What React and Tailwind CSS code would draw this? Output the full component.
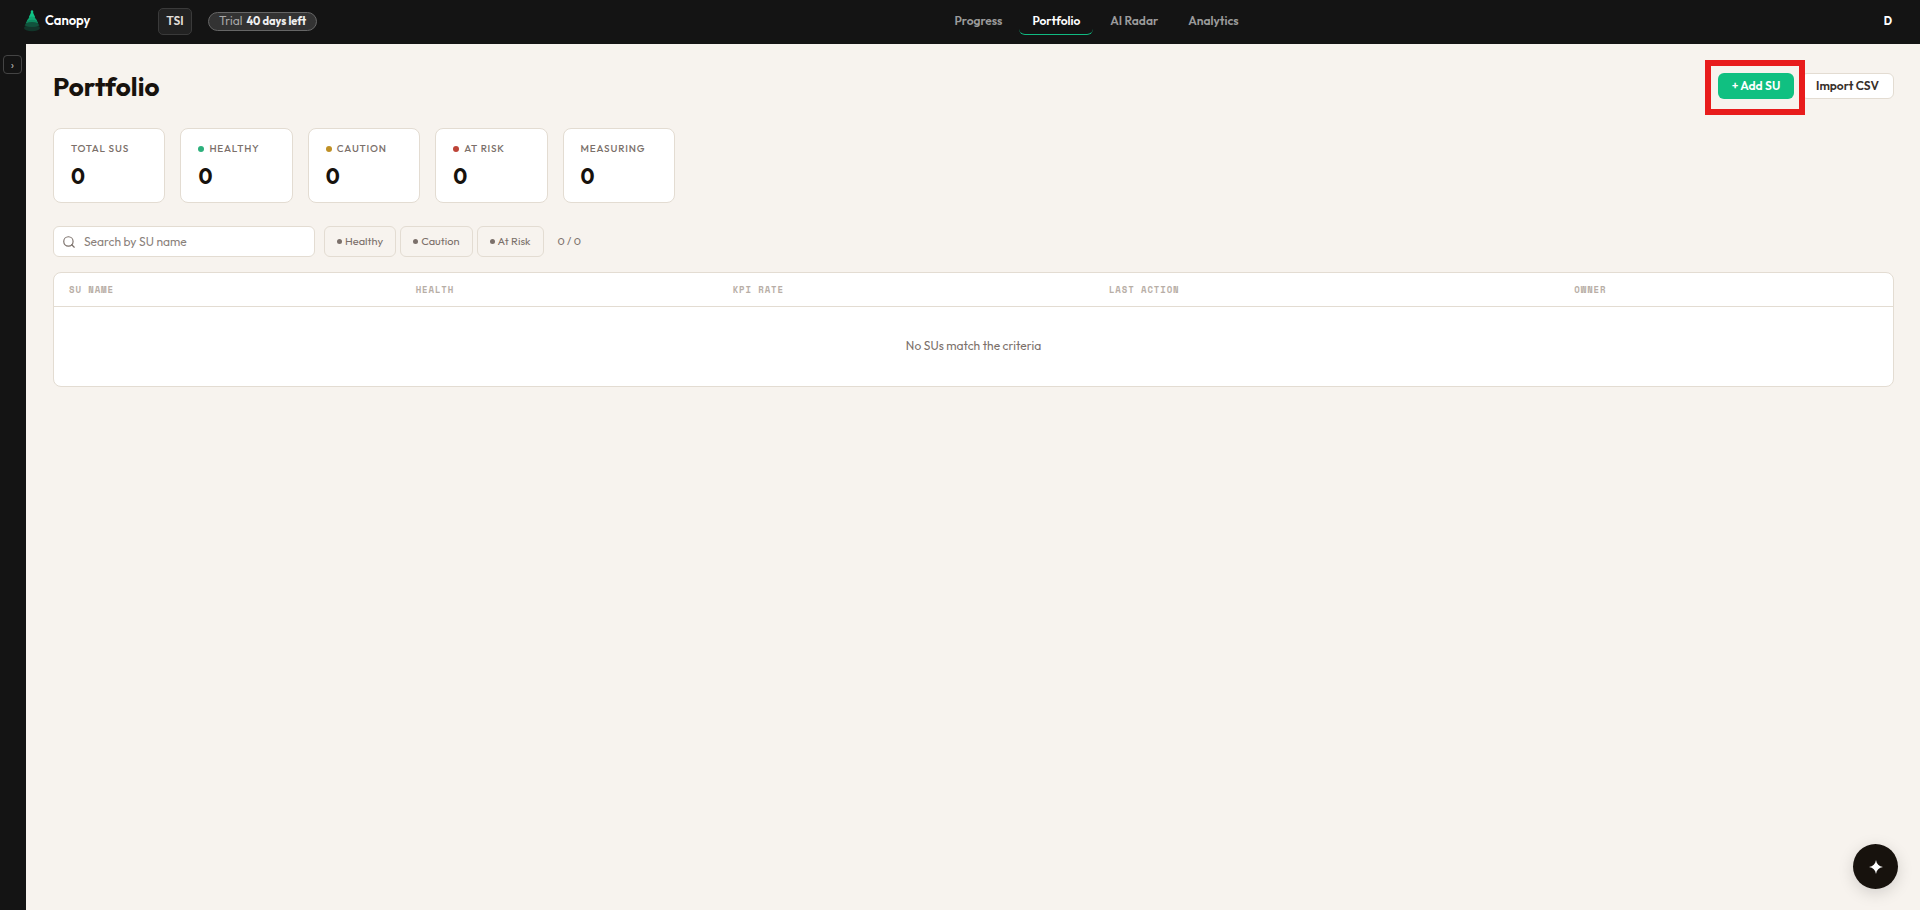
import { Search } from 'lucide-react';

const NAV_ITEMS = ['Progress', 'Portfolio', 'AI Radar', 'Analytics'];

const STATS = [
    { label: 'Total SUs', value: 0 },
    { label: 'Healthy', value: 0, dot: 'bg-[#2cb07c]' },
    { label: 'Caution', value: 0, dot: 'bg-[#bf9026]' },
    { label: 'At Risk', value: 0, dot: 'bg-[#bd4438]' },
    { label: 'Measuring', value: 0 },
];

const FILTERS = ['Healthy', 'Caution', 'At Risk'];

const COLUMNS = ['SU Name', 'Health', 'KPI Rate', 'Last Action', 'Owner'];

function Logo() {
    return (
        <svg viewBox="0 0 16 22" className="w-4 h-[22px]" aria-hidden="true">
            <ellipse cx="8" cy="18" rx="8" ry="3.2" fill="#12352a" />
            <path d="M3.4 11 Q8 9 12.6 11 L15.4 15.6 Q8 18.6 0.6 15.6 Z" fill="#11523c" />
            <path d="M3.6 9.5 Q8 8 12.4 9.5 L14.2 13.2 Q8 10.8 1.8 13.2 Z" fill="#0f8a60" />
            <path d="M6.2 4.5 L9.8 4.5 Q11 8 13 11 Q8 8.6 3 11 Q5 8 6.2 4.5 Z" fill="#10a873" />
            <path d="M7.2 1 L8.8 1 Q9.4 4.5 11 7 Q8 5.8 5 7 Q6.6 4.5 7.2 1 Z" fill="#10c486" />
            <circle cx="8" cy="1.4" r="1.2" fill="#10c486" />
        </svg>
    );
}

function Header() {
    return (
        <header className="h-11 shrink-0 bg-[#141414] flex items-center justify-between pl-6 pr-5">
            <div className="flex items-center gap-4 pb-[2px]">
                <a href="#" className="flex items-center gap-[5px] w-[118px] text-white text-[13px] font-semibold">
                    <Logo />
                    Canopy
                </a>
                <button className="h-[27px] w-[34px] rounded-[5px] border border-[#3a3a3a] bg-[#222222] text-[12px] font-semibold text-[#e0ddd8]">
                    TSI
                </button>
                <div className="h-[19px] px-[10px] rounded-full border border-[#666666] bg-[#333333] flex items-center gap-1 text-[12px] text-[#a8a8a8] whitespace-nowrap">
                    Trial <strong className="text-[11px] text-[#f0f0f0] font-bold">40 days left</strong>
                </div>
            </div>

            <nav className="flex items-center gap-1 pb-[2px]">
                {NAV_ITEMS.map((item) => (
                    <a
                        key={item}
                        href="#"
                        className={
                            item === 'Portfolio'
                                ? 'px-[13px] h-[27px] leading-[26px] rounded-[6px] border-b border-[#10b981] text-[12px] font-semibold text-white'
                                : 'px-[13px] h-[27px] leading-[26px] rounded-[6px] border-b border-transparent text-[12px] font-semibold text-[#9b9b9b]'
                        }
                    >
                        {item}
                    </a>
                ))}
            </nav>

            <button className="w-6 h-6 mb-[2px] text-[11px] font-bold text-white" aria-label="Account">D</button>
        </header>
    );
}

function StatCard({ stat }) {
    return (
        <div className="h-[75px] rounded-[8px] border border-[#e3dcd2] bg-white px-[17px] pt-[13px]">
            <div className="flex items-center gap-[5px] text-[10px] leading-[14px] font-medium uppercase tracking-[0.08em] text-[#7b706a] whitespace-nowrap">
                {stat.dot && <span className={`size-[6px] rounded-full ${stat.dot}`} />}
                {stat.label}
            </div>
            <div className="mt-[6px] text-[21px] leading-7 font-bold text-[#17120d]">{stat.value}</div>
        </div>
    );
}

export default function App() {
    return (
        <div className="min-h-screen flex flex-col bg-[#f7f3ee] font-['Outfit','Lato',sans-serif] text-[#17120d]">
            <Header />

            <div className="flex flex-1">
                <aside className="w-[26px] shrink-0 bg-[#141414] pt-[11px] pl-[3px]">
                    <button className="size-[19px] rounded-[4px] border border-[#444444] text-[12px] leading-none text-[#b0b0b0] flex items-center justify-center" aria-label="Expand sidebar">
                        ›
                    </button>
                </aside>

                <main className="flex-1 pl-[27px] pr-[26px] pt-4">
                    <div className="flex items-center justify-between h-[55px]">
                        <h1 className="pb-[2px] text-[26px] leading-8 font-bold">Portfolio</h1>
                        <div className="flex items-center">
                            {/* Highlighted primary action */}
                            <div className="relative z-10 border-[6px] border-[#e81c1c] p-[7px] pb-[10px] pr-[5px] bg-[#f7f3ee]">
                                <button className="block w-[76px] h-[26px] rounded-[6px] bg-[#10c081] text-[12px] font-semibold text-white">+ Add SU</button>
                            </div>
                            <button className="-ml-1 mb-[3px] w-[93px] h-[26px] rounded-[6px] border border-[#e3dcd2] bg-white text-[12px] font-semibold text-[#37302b]">
                                Import CSV
                            </button>
                        </div>
                    </div>

                    <div className="mt-[13px] grid grid-cols-5 gap-[15px] max-w-[622px]">
                        {STATS.map((stat) => (
                            <StatCard key={stat.label} stat={stat} />
                        ))}
                    </div>

                    <div className="mt-[23px] flex items-center gap-1">
                        <label className="mr-[5px] w-[262px] h-[31px] rounded-[6px] border border-[#e3dcd2] bg-white flex items-center gap-2 px-2">
                            <Search className="size-[14px] text-[#7b706a]" strokeWidth={2} />
                            <input
                                type="text"
                                aria-label="Search by SU name"
                                placeholder="Search by SU name"
                                className="flex-1 min-w-0 text-[12px] outline-none placeholder:text-[#8a817b]"
                            />
                        </label>
                        {FILTERS.map((filter) => (
                            <button key={filter} className="h-[31px] px-3 rounded-[6px] border border-[#e3dcd2] flex items-center gap-[3px] text-[11px] text-[#7b706a]">
                                <span className="size-[5px] rounded-full bg-[#7b706a]" />
                                {filter}
                            </button>
                        ))}
                        <span className="ml-[10px] text-[11px] text-[#7b706a]">0 / 0</span>
                    </div>

                    <div className="mt-[15px] rounded-[8px] border border-[#e3dcd2] bg-white overflow-hidden">
                        <table className="w-full">
                            <thead>
                                <tr className="h-[33px] border-b border-[#e3dcd2]">
                                    {COLUMNS.map((col) => (
                                        <th key={col} className="px-[15px] last:pr-[25px] text-left font-['Space_Mono','JetBrains_Mono','Liberation_Mono',monospace] text-[9px] font-bold uppercase tracking-widest text-[#b8aea6]">
                                            {col}
                                        </th>
                                    ))}
                                </tr>
                            </thead>
                            <tbody>
                                <tr className="h-20">
                                    <td colSpan={5} className="text-center text-[12px] text-[#7b706a]">No SUs match the criteria</td>
                                </tr>
                            </tbody>
                        </table>
                    </div>
                </main>
            </div>

            <button className="fixed right-[22px] bottom-[21px] size-[45px] rounded-full bg-[#17120d] shadow-[0_4px_16px_rgba(0,0,0,0.15)] flex items-center justify-center" aria-label="Open assistant">
                <svg viewBox="0 0 14 14" className="size-[14px]" fill="#ffffff">
                    <path d="M7 0 C7.6 4 10 6.4 14 7 C10 7.6 7.6 10 7 14 C6.4 10 4 7.6 0 7 C4 6.4 6.4 4 7 0 Z" />
                </svg>
            </button>
        </div>
    );
}
